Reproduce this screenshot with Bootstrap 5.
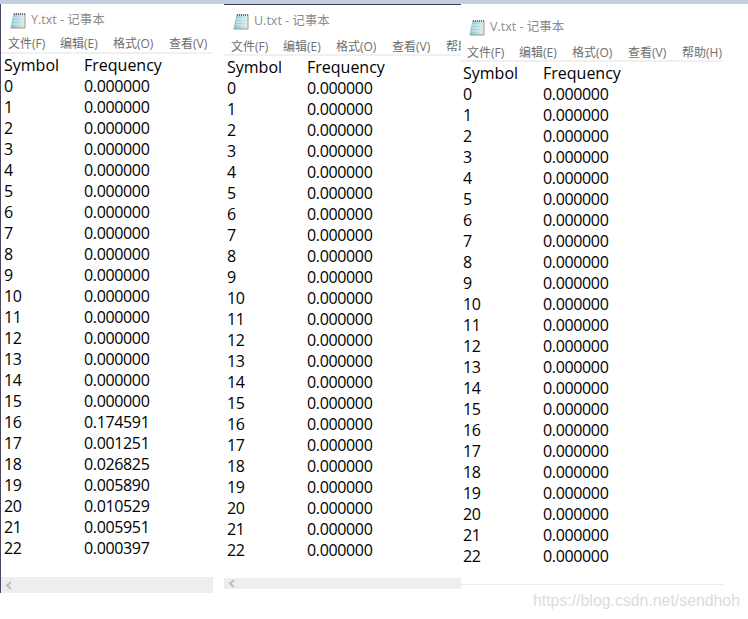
<!DOCTYPE html>
<html lang="zh">
<head>
<meta charset="utf-8">
<title>Notepad windows</title>
<link rel="stylesheet" href="https://cdn.jsdelivr.net/npm/bootstrap@5.3.0/dist/css/bootstrap.min.css">
<style>
html,body{margin:0;width:748px;height:619px;overflow:hidden;background:#fff}
.desk{position:relative;width:748px;height:619px;background:#fff}
.topstrip{height:4px;background:#c5cde0}
.win{position:absolute;background:#fff;font-family:"Open Sans","Noto Sans CJK SC",sans-serif;color:#000;overflow:hidden}
.win-y{left:1px;top:4px;width:212px;height:589px}
.win-u{left:224px;top:4px;width:237px;height:585px;border-top:1px solid #3f3a5c}
.win-v{left:461px;top:4px;width:262px;height:581px;border-bottom:1px solid #ececec}
.edge{position:absolute;left:0;top:4px;width:1px;height:589px;background:#4a4662}
.ttl{gap:5px;font-size:12.5px;color:#8d8d8d;white-space:nowrap}
.win-y .ttl{padding-left:9px;height:31px;padding-top:1px}
.win-u .ttl{padding-left:9px;height:33px;padding-top:0}
.win-v .ttl{padding-left:8px;height:40px;padding-top:6px}
.mnu{font-size:12px;line-height:18px;color:#6e6e6e;white-space:nowrap;border-bottom:2px solid #f0f0f0;box-sizing:content-box}
.win-y .mnu{padding-left:7px;height:17px}
.win-u .mnu{padding-left:7px;height:16px}
.win-v .mnu{padding-left:6px;height:16px}
.mnu span{display:block;flex:0 0 auto}
.mnu span:nth-child(1){width:52px}
.mnu span:nth-child(2){width:53px}
.mnu span:nth-child(3){width:56px}
.mnu span:nth-child(4){width:54px}
.body-t{font-size:16px;line-height:21px;letter-spacing:-.35px;font-family:"Open Sans",sans-serif;padding-top:1px}
.win-y .body-t,.win-u .body-t{padding-left:3px}
.win-v .body-t{padding-left:2px}
.ln{height:21px;white-space:nowrap}
.ln-head{letter-spacing:0}
.c1{width:80px;flex:0 0 80px}
.sb{position:absolute;left:0;right:0;bottom:0;background:#eee}
.win-y .sb{height:16px}
.win-u .sb{height:11px}
.wm{position:absolute;left:533px;top:591px;font-family:"Liberation Sans",sans-serif;font-size:15.85px;line-height:20px;color:#dcdcdc;white-space:nowrap}
</style>
</head>
<body>
<svg width="0" height="0" class="d-block">
  <defs>
    <linearGradient id="padfill" x1="0" x2="1" y1="0" y2="0"><stop offset="0" stop-color="#7fc0cf"/><stop offset="1" stop-color="#e4f0f1"/></linearGradient>
    <symbol id="pad" viewBox="0 0 16 17">
      <path d="M3.500 1.500H15V16H.5z" fill="url(#padfill)"/>
      <path d="M15 1.500V16H.5" fill="none" stroke="#a59a7a"/>
      <path d="M4.500 1v2M6.500 1v2M8.500 1v2M10.500 1v2M12.500 1v2M14.500 1v2" stroke="#6a7478"/>
      <path d="M3.500 6H14M3 9H14M2.500 12H14" stroke="#d8ecef"/>
    </symbol>
  </defs>
</svg>
<div class="desk">
<div class="topstrip"></div>
<div class="edge"></div>

<section class="win win-y">
  <div class="ttl d-flex align-items-center"><svg width="16" height="17"><use href="#pad"/></svg><span>Y.txt - 记事本</span></div>
  <div class="mnu d-flex"><span>文件(F)</span><span>编辑(E)</span><span>格式(O)</span><span>查看(V)</span></div>
  <div class="body-t">
    <div class="ln ln-head d-flex"><div class="c1">Symbol</div><div>Frequency</div></div>
    <div class="ln d-flex"><div class="c1">0</div><div>0.000000</div></div>
    <div class="ln d-flex"><div class="c1">1</div><div>0.000000</div></div>
    <div class="ln d-flex"><div class="c1">2</div><div>0.000000</div></div>
    <div class="ln d-flex"><div class="c1">3</div><div>0.000000</div></div>
    <div class="ln d-flex"><div class="c1">4</div><div>0.000000</div></div>
    <div class="ln d-flex"><div class="c1">5</div><div>0.000000</div></div>
    <div class="ln d-flex"><div class="c1">6</div><div>0.000000</div></div>
    <div class="ln d-flex"><div class="c1">7</div><div>0.000000</div></div>
    <div class="ln d-flex"><div class="c1">8</div><div>0.000000</div></div>
    <div class="ln d-flex"><div class="c1">9</div><div>0.000000</div></div>
    <div class="ln d-flex"><div class="c1">10</div><div>0.000000</div></div>
    <div class="ln d-flex"><div class="c1">11</div><div>0.000000</div></div>
    <div class="ln d-flex"><div class="c1">12</div><div>0.000000</div></div>
    <div class="ln d-flex"><div class="c1">13</div><div>0.000000</div></div>
    <div class="ln d-flex"><div class="c1">14</div><div>0.000000</div></div>
    <div class="ln d-flex"><div class="c1">15</div><div>0.000000</div></div>
    <div class="ln d-flex"><div class="c1">16</div><div>0.174591</div></div>
    <div class="ln d-flex"><div class="c1">17</div><div>0.001251</div></div>
    <div class="ln d-flex"><div class="c1">18</div><div>0.026825</div></div>
    <div class="ln d-flex"><div class="c1">19</div><div>0.005890</div></div>
    <div class="ln d-flex"><div class="c1">20</div><div>0.010529</div></div>
    <div class="ln d-flex"><div class="c1">21</div><div>0.005951</div></div>
    <div class="ln d-flex"><div class="c1">22</div><div>0.000397</div></div>
  </div>
  <div class="sb d-flex align-items-center"><svg class="ms-1" width="8" height="9" viewBox="0 0 8 9"><path d="M6 1L2 4.500 6 8" fill="none" stroke="#bdbdbd" stroke-width="2"/></svg></div>
</section>

<section class="win win-u">
  <div class="ttl d-flex align-items-center"><svg width="16" height="17"><use href="#pad"/></svg><span>U.txt - 记事本</span></div>
  <div class="mnu d-flex"><span>文件(F)</span><span>编辑(E)</span><span>格式(O)</span><span>查看(V)</span><span>帮助(H)</span></div>
  <div class="body-t">
    <div class="ln ln-head d-flex"><div class="c1">Symbol</div><div>Frequency</div></div>
    <div class="ln d-flex"><div class="c1">0</div><div>0.000000</div></div>
    <div class="ln d-flex"><div class="c1">1</div><div>0.000000</div></div>
    <div class="ln d-flex"><div class="c1">2</div><div>0.000000</div></div>
    <div class="ln d-flex"><div class="c1">3</div><div>0.000000</div></div>
    <div class="ln d-flex"><div class="c1">4</div><div>0.000000</div></div>
    <div class="ln d-flex"><div class="c1">5</div><div>0.000000</div></div>
    <div class="ln d-flex"><div class="c1">6</div><div>0.000000</div></div>
    <div class="ln d-flex"><div class="c1">7</div><div>0.000000</div></div>
    <div class="ln d-flex"><div class="c1">8</div><div>0.000000</div></div>
    <div class="ln d-flex"><div class="c1">9</div><div>0.000000</div></div>
    <div class="ln d-flex"><div class="c1">10</div><div>0.000000</div></div>
    <div class="ln d-flex"><div class="c1">11</div><div>0.000000</div></div>
    <div class="ln d-flex"><div class="c1">12</div><div>0.000000</div></div>
    <div class="ln d-flex"><div class="c1">13</div><div>0.000000</div></div>
    <div class="ln d-flex"><div class="c1">14</div><div>0.000000</div></div>
    <div class="ln d-flex"><div class="c1">15</div><div>0.000000</div></div>
    <div class="ln d-flex"><div class="c1">16</div><div>0.000000</div></div>
    <div class="ln d-flex"><div class="c1">17</div><div>0.000000</div></div>
    <div class="ln d-flex"><div class="c1">18</div><div>0.000000</div></div>
    <div class="ln d-flex"><div class="c1">19</div><div>0.000000</div></div>
    <div class="ln d-flex"><div class="c1">20</div><div>0.000000</div></div>
    <div class="ln d-flex"><div class="c1">21</div><div>0.000000</div></div>
    <div class="ln d-flex"><div class="c1">22</div><div>0.000000</div></div>
  </div>
  <div class="sb d-flex align-items-center"><svg class="ms-1" width="8" height="9" viewBox="0 0 8 9"><path d="M6 1L2 4.500 6 8" fill="none" stroke="#bdbdbd" stroke-width="2"/></svg></div>
</section>

<section class="win win-v">
  <div class="ttl d-flex align-items-center"><svg width="16" height="17"><use href="#pad"/></svg><span>V.txt - 记事本</span></div>
  <div class="mnu d-flex"><span>文件(F)</span><span>编辑(E)</span><span>格式(O)</span><span>查看(V)</span><span>帮助(H)</span></div>
  <div class="body-t">
    <div class="ln ln-head d-flex"><div class="c1">Symbol</div><div>Frequency</div></div>
    <div class="ln d-flex"><div class="c1">0</div><div>0.000000</div></div>
    <div class="ln d-flex"><div class="c1">1</div><div>0.000000</div></div>
    <div class="ln d-flex"><div class="c1">2</div><div>0.000000</div></div>
    <div class="ln d-flex"><div class="c1">3</div><div>0.000000</div></div>
    <div class="ln d-flex"><div class="c1">4</div><div>0.000000</div></div>
    <div class="ln d-flex"><div class="c1">5</div><div>0.000000</div></div>
    <div class="ln d-flex"><div class="c1">6</div><div>0.000000</div></div>
    <div class="ln d-flex"><div class="c1">7</div><div>0.000000</div></div>
    <div class="ln d-flex"><div class="c1">8</div><div>0.000000</div></div>
    <div class="ln d-flex"><div class="c1">9</div><div>0.000000</div></div>
    <div class="ln d-flex"><div class="c1">10</div><div>0.000000</div></div>
    <div class="ln d-flex"><div class="c1">11</div><div>0.000000</div></div>
    <div class="ln d-flex"><div class="c1">12</div><div>0.000000</div></div>
    <div class="ln d-flex"><div class="c1">13</div><div>0.000000</div></div>
    <div class="ln d-flex"><div class="c1">14</div><div>0.000000</div></div>
    <div class="ln d-flex"><div class="c1">15</div><div>0.000000</div></div>
    <div class="ln d-flex"><div class="c1">16</div><div>0.000000</div></div>
    <div class="ln d-flex"><div class="c1">17</div><div>0.000000</div></div>
    <div class="ln d-flex"><div class="c1">18</div><div>0.000000</div></div>
    <div class="ln d-flex"><div class="c1">19</div><div>0.000000</div></div>
    <div class="ln d-flex"><div class="c1">20</div><div>0.000000</div></div>
    <div class="ln d-flex"><div class="c1">21</div><div>0.000000</div></div>
    <div class="ln d-flex"><div class="c1">22</div><div>0.000000</div></div>
  </div>
</section>

<div class="wm">https://blog.csdn.net/sendhoh</div>
</div>
<script src="https://cdn.jsdelivr.net/npm/bootstrap@5.3.0/dist/js/bootstrap.bundle.min.js"></script>
</body>
</html>
